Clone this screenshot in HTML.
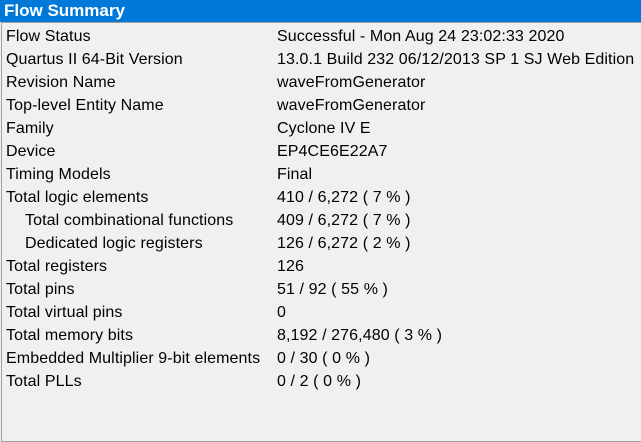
<!DOCTYPE html><html><head><style>
body{margin:0;width:641px;height:416px;background:#f0f0f0;font-family:"Liberation Sans",sans-serif;overflow:hidden;position:relative}
.h{position:absolute;left:0;top:0;width:641px;height:22px;background:#0078d7;color:#fff;font-weight:bold;font-size:17px;line-height:22px;padding-left:4px;box-sizing:border-box}
.box{position:absolute;left:1px;top:22px;width:645px;height:420px;border:1px solid #a0a0a0;box-sizing:border-box}
.r{position:absolute;left:6px;height:23px;line-height:25px;font-size:16px;letter-spacing:0.1px;color:#000;white-space:nowrap}
.v{left:277px}
.i{left:25px}
</style></head><body>
<div class="h">Flow Summary</div><div class="box"></div>
<div class="r" style="top:24px">Flow Status</div><div class="r v" style="top:24px">Successful - Mon Aug 24 23:02:33 2020</div>
<div class="r" style="top:47px">Quartus II 64-Bit Version</div><div class="r v" style="top:47px">13.0.1 Build 232 06/12/2013 SP 1 SJ Web Edition</div>
<div class="r" style="top:70px">Revision Name</div><div class="r v" style="top:70px">waveFromGenerator</div>
<div class="r" style="top:93px">Top-level Entity Name</div><div class="r v" style="top:93px">waveFromGenerator</div>
<div class="r" style="top:116px">Family</div><div class="r v" style="top:116px">Cyclone IV E</div>
<div class="r" style="top:139px">Device</div><div class="r v" style="top:139px">EP4CE6E22A7</div>
<div class="r" style="top:162px">Timing Models</div><div class="r v" style="top:162px">Final</div>
<div class="r" style="top:185px">Total logic elements</div><div class="r v" style="top:185px">410 / 6,272 ( 7 % )</div>
<div class="r i" style="top:208px">Total combinational functions</div><div class="r v" style="top:208px">409 / 6,272 ( 7 % )</div>
<div class="r i" style="top:231px">Dedicated logic registers</div><div class="r v" style="top:231px">126 / 6,272 ( 2 % )</div>
<div class="r" style="top:254px">Total registers</div><div class="r v" style="top:254px">126</div>
<div class="r" style="top:277px">Total pins</div><div class="r v" style="top:277px">51 / 92 ( 55 % )</div>
<div class="r" style="top:300px">Total virtual pins</div><div class="r v" style="top:300px">0</div>
<div class="r" style="top:323px">Total memory bits</div><div class="r v" style="top:323px">8,192 / 276,480 ( 3 % )</div>
<div class="r" style="top:346px">Embedded Multiplier 9-bit elements</div><div class="r v" style="top:346px">0 / 30 ( 0 % )</div>
<div class="r" style="top:369px">Total PLLs</div><div class="r v" style="top:369px">0 / 2 ( 0 % )</div>
</body></html>
